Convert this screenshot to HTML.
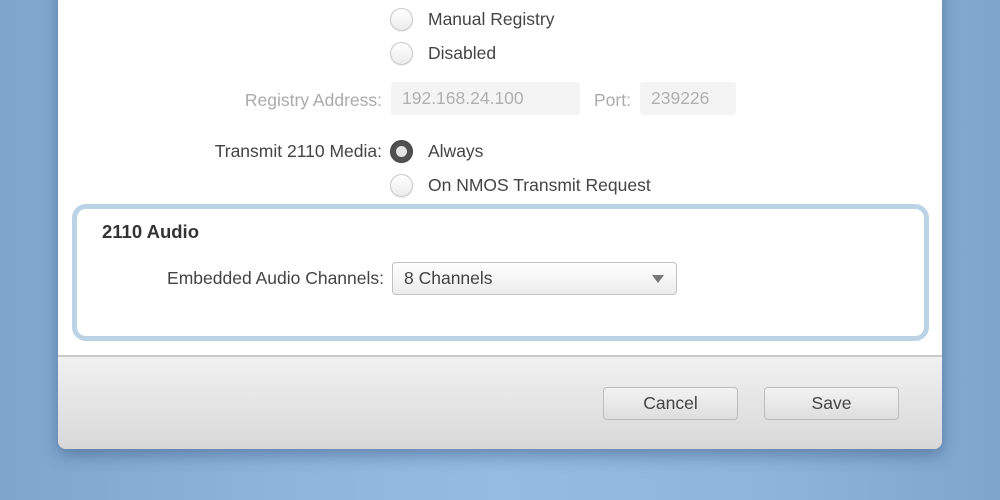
<!DOCTYPE html>
<html><head><style>
*{box-sizing:border-box;margin:0;padding:0}
body{width:1000px;height:500px;overflow:hidden;position:relative;font-family:"Liberation Sans",sans-serif;
background:linear-gradient(90deg,#7ea5cc 0%,#8fb5dd 30%,#94bbe2 50%,#8fb5dc 75%,#7ea5cb 100%);}
.dlg{position:absolute;left:58px;top:-20px;width:884px;height:469px;background:#fff;border-radius:0 0 8px 8px;
box-shadow:0 6px 16px rgba(40,70,110,.45);overflow:hidden}
.t{position:absolute;font-size:17.5px;color:#444;white-space:nowrap;line-height:20px}
.rt{text-align:right}
.g{color:#aaa}
.r{position:absolute;width:23px;height:23px;border-radius:50%;border:1px solid #c8c8c8;
background:linear-gradient(#fff,#ececec);box-shadow:0 1px 1px rgba(0,0,0,.08)}
.r.on{background:#505050;border:1px solid #444}
.r.on::after{content:"";position:absolute;left:5px;top:5px;width:11px;height:11px;border-radius:50%;background:#e4e4e4}
.f{position:absolute;background:#f4f4f4;border-radius:3px;height:33px;font-size:17.5px;color:#b0b0b0;line-height:33px;padding-left:11px}
.box{position:absolute;left:72px;top:204px;width:857px;height:137px;border:5px solid #bcd3e6;border-radius:14px;background:#fff}
.sel{position:absolute;left:392px;top:262px;width:285px;height:33px;border:1px solid #c2c2c2;border-radius:4px;
background:linear-gradient(#fff,#ececec);font-size:17.5px;color:#444;line-height:31px;padding-left:11px}
.sel::after{content:"";position:absolute;right:12px;top:12px;border-left:6px solid transparent;border-right:6px solid transparent;border-top:8px solid #777}
.foot{position:absolute;left:58px;top:355px;width:884px;height:94px;border-top:2px solid #c9c9c9;
background:linear-gradient(#f1f1f1,#d8d8d8);border-radius:0 0 8px 8px}
.btn{position:absolute;top:387px;width:135px;height:33px;border:1px solid #bdbdbd;border-radius:4px;
background:linear-gradient(#f3f3f3,#dedede);font-size:17.5px;color:#444;text-align:center;line-height:31px}
</style></head><body>
<div class="dlg"></div>
<div class="r" style="left:390px;top:8px"></div><div class="t" style="left:428px;top:9px">Manual Registry</div>
<div class="r" style="left:390px;top:42px"></div><div class="t" style="left:428px;top:43px">Disabled</div>
<div class="t g rt" style="right:618px;top:90px">Registry Address:</div>
<div class="f" style="left:391px;top:82px;width:189px">192.168.24.100</div>
<div class="t g" style="left:594px;top:90px">Port:</div>
<div class="f" style="left:640px;top:82px;width:96px">239226</div>
<div class="t rt" style="right:618px;top:141px">Transmit 2110 Media:</div>
<div class="r on" style="left:390px;top:140px"></div><div class="t" style="left:428px;top:141px">Always</div>
<div class="r" style="left:390px;top:174px"></div><div class="t" style="left:428px;top:175px">On NMOS Transmit Request</div>
<div class="box"></div>
<div class="t" style="left:102px;top:222px;font-weight:bold;color:#333;font-size:18.5px">2110 Audio</div>
<div class="t rt" style="right:616px;top:268px">Embedded Audio Channels:</div>
<div class="sel">8 Channels</div>
<div class="foot"></div>
<div class="btn" style="left:603px">Cancel</div>
<div class="btn" style="left:764px">Save</div>
</body></html>
